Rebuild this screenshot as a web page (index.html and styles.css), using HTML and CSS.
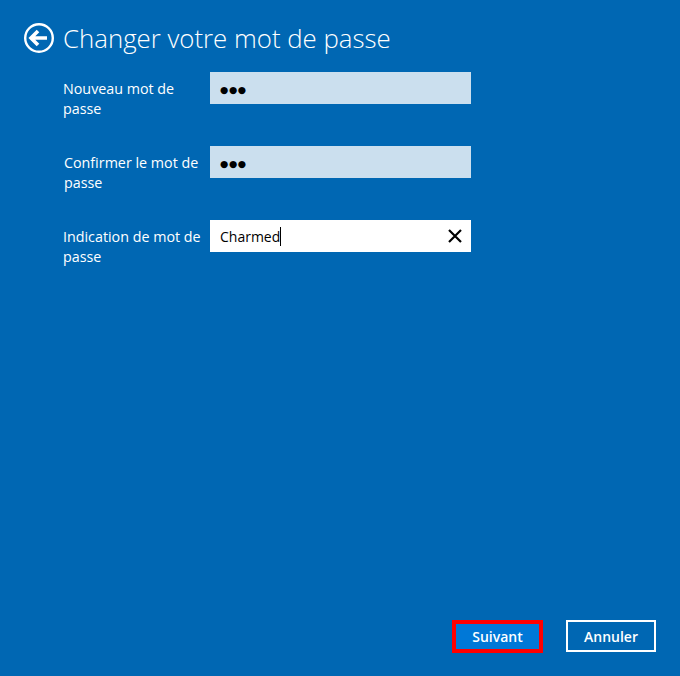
FILE: index.html
```html
<!DOCTYPE html>
<html lang="fr">

<head>
    <meta charset="UTF-8">
    <meta name="viewport" content="width=device-width, initial-scale=1.0">
    <title>Changer votre mot de passe</title>
    <link rel="stylesheet" href="styles.css">
</head>

<body>
    <div class="page">
        <header class="header">
            <svg class="back-icon" width="32" height="32" viewBox="0 0 32 32">
                <circle cx="16" cy="16" r="13.8" fill="none" stroke="#fff" stroke-width="2.4" />
                <path d="M8 16H24M15 9L8 16L15 23" fill="none" stroke="#fff" stroke-width="3.6" />
            </svg>
            <h1>Changer votre mot de passe</h1>
        </header>

        <div class="form">
            <div class="row">
                <label>Nouveau mot de passe</label>
                <div class="field field-filled"><span class="dots">●●●</span></div>
            </div>
            <div class="row">
                <label class="label-shift">Confirmer le mot de passe</label>
                <div class="field field-filled"><span class="dots">●●●</span></div>
            </div>
            <div class="row">
                <label>Indication de mot de passe</label>
                <div class="field field-active">
                    <span class="value">Charmed</span><span class="caret"></span>
                    <svg class="clear-icon" width="16" height="16" viewBox="0 0 16 16">
                        <path d="M2 2L14 14M14 2L2 14" fill="none" stroke="#000" stroke-width="2.2" />
                    </svg>
                </div>
            </div>
        </div>

        <div class="actions">
            <button class="button button-next">Suivant</button>
            <button class="button button-cancel">Annuler</button>
        </div>
    </div>
</body>

</html>
```

FILE: styles.css
```css
* {
    box-sizing: border-box;
}

html,
body {
    margin: 0;
    height: 100%;
}

body {
    background-color: #0067b3;
    color: #fff;
    font-family: "Open Sans", "Noto Sans", sans-serif;
}

.page {
    height: 676px;
    display: flex;
    flex-direction: column;
    padding: 22px 24px 23px 23px;
}

.header {
    display: flex;
    align-items: center;
    gap: 8px;
    height: 32px;
}

.header h1 {
    margin: 0;
    font-size: 25.8px;
    font-weight: 300;
    line-height: 32px;
    white-space: nowrap;
}

.form {
    display: flex;
    flex-direction: column;
    gap: 42px;
    margin-top: 18px;
    padding-left: 40px;
}

.row {
    display: flex;
    align-items: flex-start;
    height: 32px;
}

.row label {
    width: 147px;
    font-size: 14.3px;
    line-height: 20px;
    padding-top: 7px;
}

.label-shift {
    padding-left: 1px;
}

.field {
    width: 261px;
    height: 32px;
    display: flex;
    align-items: center;
    padding-left: 10px;
    color: #000;
    font-size: 14px;
}

.field-filled {
    background-color: #cbdfee;
}

.field-active {
    background-color: #fff;
    padding-right: 8px;
}

.dots {
    font-family: "DejaVu Sans", sans-serif;
    font-size: 9.5px;
    letter-spacing: 0.6px;
    padding-top: 2px;
}

.caret {
    width: 1px;
    height: 19px;
    background-color: #000;
}

.clear-icon {
    margin-left: auto;
}

.actions {
    display: flex;
    justify-content: flex-end;
    align-items: flex-start;
    gap: 23px;
    margin-top: auto;
}

.button {
    width: 90px;
    height: 32px;
    border: 2px solid #fff;
    background-color: transparent;
    color: #fff;
    font-family: inherit;
    font-size: 14px;
    font-weight: 600;
    padding: 0;
}

.button-next {
    width: 91px;
    height: 33px;
    background-color: #0078d7;
    border: 4px solid #f00;
    border-radius: 0;
}
```
